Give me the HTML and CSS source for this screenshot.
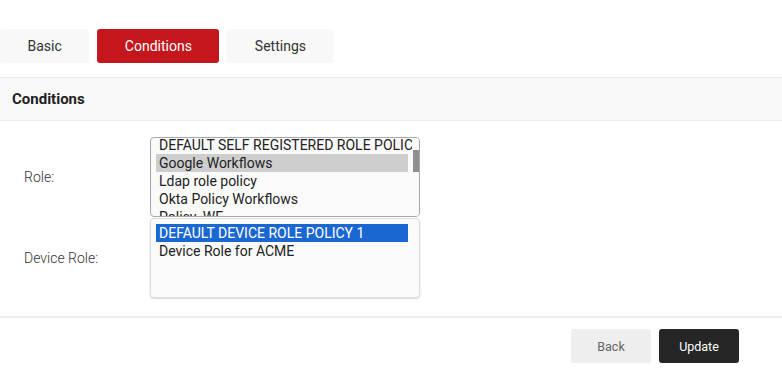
FILE: index.html
```html
<!DOCTYPE html>
<html>
<head>
<meta charset="utf-8">
<link rel="stylesheet" href="styles.css">
</head>
<body>
<div class="tabs">
  <div class="tab">Basic</div>
  <div class="tab active">Conditions</div>
  <div class="tab">Settings</div>
</div>
<div class="section-head">Conditions</div>
<div class="form">
  <div class="row">
    <div class="label">Role:</div>
    <div class="listbox lb-role">
      <div class="options scrolled">
        <div class="opt">DEFAULT SELF REGISTERED ROLE POLICY</div>
        <div class="opt sel-gray">Google Workflows</div>
        <div class="opt">Ldap role policy</div>
        <div class="opt">Okta Policy Workflows</div>
        <div class="opt">Policy_WF</div>
      </div>
      <div class="scrollbar"><div class="thumb"></div></div>
    </div>
  </div>
  <div class="row row-device">
    <div class="label">Device Role:</div>
    <div class="listbox lb-device">
      <div class="options">
        <div class="opt sel-blue">DEFAULT DEVICE ROLE POLICY 1</div>
        <div class="opt">Device Role for ACME</div>
      </div>
    </div>
  </div>
</div>
<div class="footer">
  <button class="btn back">Back</button>
  <button class="btn update">Update</button>
</div>
</body>
</html>
```
FILE: styles.css
```css
html, body {
  margin: 0;
  padding: 0;
  background: #ffffff;
  font-family: Roboto, "Liberation Sans", sans-serif;
  color: #222;
}
.tabs {
  display: flex;
  gap: 8px;
  padding-top: 29px;
  height: 34px;
}
.tab {
  height: 34px;
  line-height: 34px;
  padding: 0 27.5px;
  background: #f8f8f8;
  border-radius: 3px;
  font-size: 14px;
  color: #333;
}
.tab.active {
  background: #c4161c;
  color: #fff;
}
.section-head {
  margin-top: 14px;
  border-top: 1px solid #ebebeb;
  border-bottom: 1px solid #ebebeb;
  background: #f9f9f9;
  height: 42px;
  line-height: 42px;
  padding-left: 12px;
  font-weight: bold;
  font-size: 15px;
  color: #222;
}
.form {
  padding-top: 16px;
  padding-bottom: 18px;
  border-bottom: 2px solid #efefef;
}
.row {
  display: flex;
  align-items: center;
}
.row-device {
  margin-top: 1px;
}
.label {
  width: 126px;
  padding-left: 24px;
  font-size: 14px;
  font-weight: 300;
  color: #333;
}
.listbox {
  position: relative;
  width: 268px;
  height: 78px;
  background: #fafafa;
  border-radius: 4px;
  overflow: hidden;
  font-size: 14px;
}
.lb-role {
  border: 1px solid #a8a8a8;
}
.lb-device {
  border: 1px solid #dcdcdc;
  box-shadow: 0 1px 2px rgba(0,0,0,0.15);
}
.options {
  padding: 5px 11px 0 5px;
}
.options.scrolled {
  margin-top: -7px;
}
.opt {
  height: 18px;
  line-height: 18px;
  padding-left: 3px;
  white-space: nowrap;
  overflow: visible;
  color: #222;
}
.sel-gray {
  background: #cecece;
}
.sel-blue {
  background: #1a67d2;
  color: #fff;
}
.scrollbar {
  position: absolute;
  right: 0;
  top: 0;
  width: 7px;
  height: 100%;
  background: #fafafa;
}
.thumb {
  margin: 12px 0 0 1px;
  height: 22px;
  background: #8f8f8f;
}
.footer {
  display: flex;
  justify-content: flex-end;
  gap: 8px;
  padding: 11px 43px 0 0;
}
.btn {
  width: 80px;
  height: 34px;
  border: none;
  border-radius: 3px;
  font-family: Roboto, "Liberation Sans", sans-serif;
  font-size: 12.5px;
}
.back {
  background: #eeeeee;
  color: #666;
}
.update {
  background: #262626;
  color: #fff;
}
```
